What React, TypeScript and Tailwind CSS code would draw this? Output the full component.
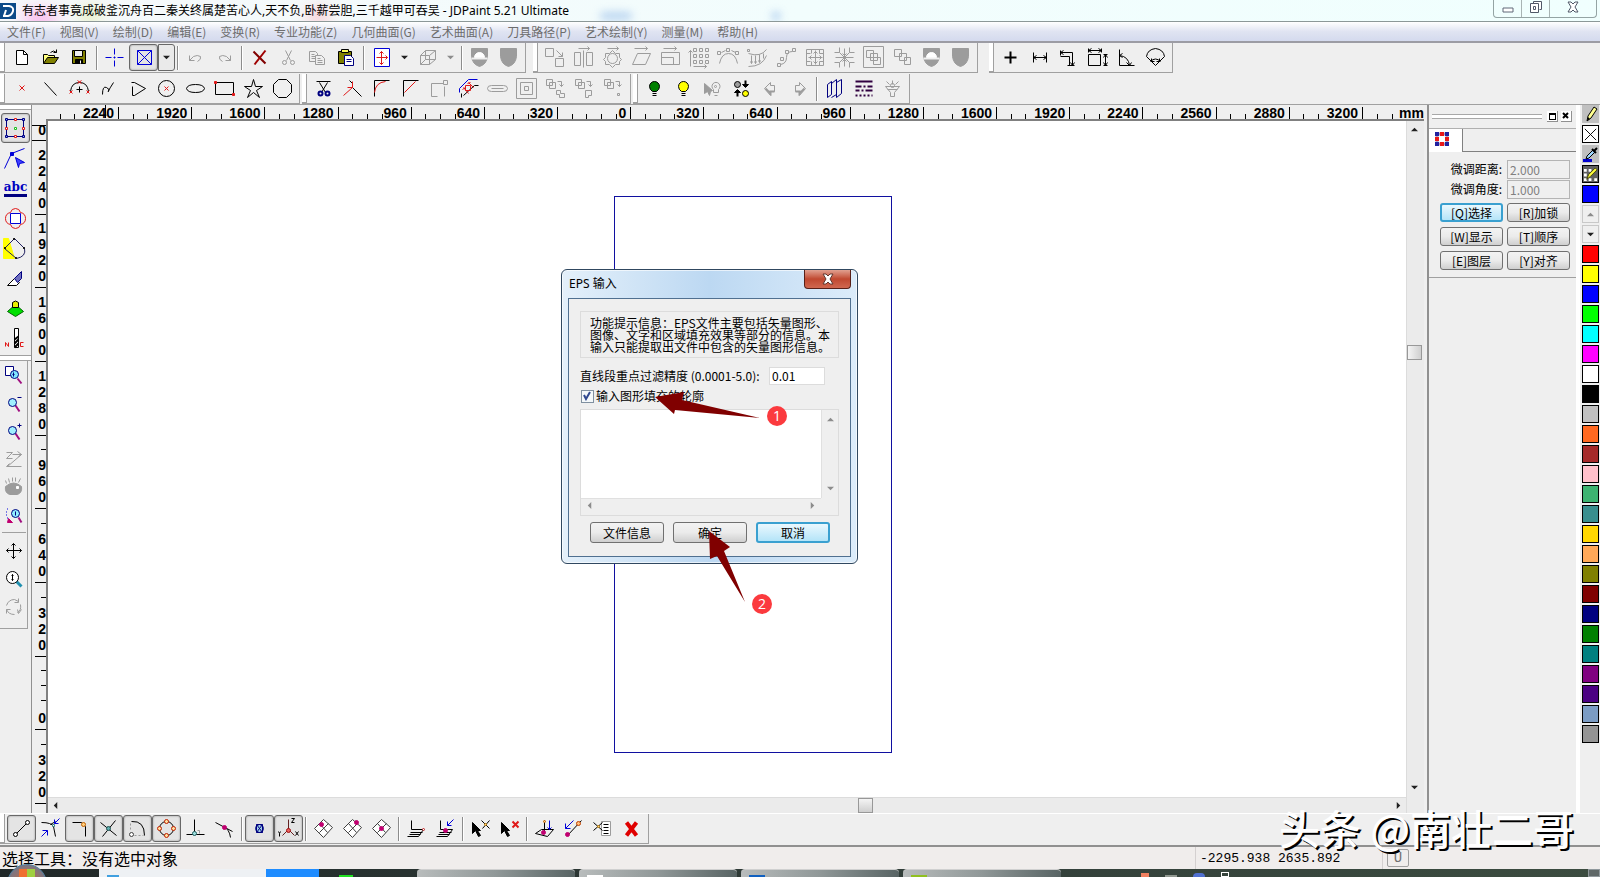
import React from 'react';
import clsx from 'clsx';

type Shape = [d: string, stroke?: string, fill?: string, width?: number];

const K = '#000000';
const G = '#9c9c9c';
const B = '#0000d8';
const N = '#000080';
const R = '#e01818';
const M = '#c00070';

const circle = (x: number, y: number, r: number) =>
  `M${x - r} ${y}a${r} ${r} 0 1 0 ${2 * r} 0a${r} ${r} 0 1 0 ${-2 * r} 0z`;
const box = (x: number, y: number, w: number, h: number) => `M${x} ${y}h${w}v${h}h${-w}z`;

const shield = 'M2 1h16v8q-1 8-8 10q-7-2-8-10z';
const arrowTop = 'M5 1h11M14 -1l2 2l-2 2';
const bulb = 'M8 13q-3-2-3-5a5 5 0 0 1 10 0q0 3-3 5z';
const mesh = 'M10 1l9 8l-9 10l-9-9zM6 5l8 9M15 5l-9 9';
const pointer = 'M2 4v11l3-3l3 6l2-1l-3-5h3z';

// every icon sits on a 21px grid, centred on 10,10
const icons: Record<string, Shape[]> = {
  // standard
  new: [['M5 3h7l4 4v10h-11z', K, '#fff'], ['M12 3v4h4', K]],
  open: [['M3 16v-9h4l1 1h6v3', K, '#ffff80'], ['M3 16l4-6h11l-4 6z', K, '#808000'], ['M10 5q3-3 6 0M16 2v3h-3', K]],
  save: [[box(3, 3, 13, 13), K, '#808000'], [box(5, 3, 8, 6), K, '#efefef'], [box(6, 12, 7, 4), K, K], ['M11 13v3', '#fff']],
  cross: [['M1 10h6M9 10h2M13 10h6M10 1v6M10 9v2M10 13v6', B]],
  marquee: [[box(4, 3, 14, 14), B], ['M4 3l14 14M18 3L4 17', B]],
  undo: [['M4 8v5h5M4 13l4-4q4-2 7 0q1 3-3 5', G]],
  redo: [['M16 8v5h-5M16 13l-4-4q-4-2-7 0q-1 3 3 5', G]],
  remove: [['M4 4l12 12', '#800000', 'none', 2], ['M16 3L5 17', '#a00000', 'none', 2]],
  cut: [['M7 3l5 10M13 3l-5 10', G], [circle(6, 15, 2), G], [circle(14, 15, 2), G]],
  copy: [['M2 4h6l2 2v8h-8zM4 7h3M4 9h4M4 11h4', G], ['M8 8h6l3 3v6h-9z', G, '#efefef'], ['M10 11h3M10 13h5M10 15h5', G]],
  paste: [[box(2, 4, 13, 12), K, '#808000'], [box(5, 2, 7, 3), K, '#ffff60'], ['M8 8h6l3 3v7h-9z', N, '#fff'], ['M10 12h5M10 14h5', N]],
  fit: [[box(3, 1, 15, 18), B, '#fff'], ['M10 4v13M5 10h11M8 6l2-2l2 2M8 15l2 2l2-2M14 8l2 2l-2 2', R]],
  cube: [['M3 8h9v9h-9zM3 8l5-5h10l-6 5M18 3v9l-6 5M8 3v9h10M8 12l-5 5', G]],
  maskHalf: [[shield, G, G], ['M5 10a5 5 0 0 1 10 0z', '#fff', '#fff'], ['M2 11h16', '#efefef', 'none', 2]],
  mask: [[shield, G, G]],
  // transform
  shift: [[box(1, 1, 8, 8), G], [box(11, 11, 8, 8), G], ['M12 3l6 6M18 5v4h-4', G]],
  mirror: [[box(1, 5, 6, 13), G], [box(13, 5, 6, 13), G], ['M10 3v17', G], [arrowTop, G]],
  rotate: [[circle(10, 11, 5), G], ['M10 3l3 3h4v4l2 2l-2 2v3h-4l-3 3l-3-3h-4v-3l-2-2l2-2v-4h4z', G], [arrowTop, G]],
  skew: [['M1 17l5-11h13l-5 11z', G], ['M3 1h13M14 -1l2 2l-2 2', G]],
  resize: [[box(1, 5, 18, 12), G], ['M1 10h12v7', G], ['M3 1h13M14 -1l2 2l-2 2', G]],
  array: [
    [[4, 10, 16].map((x) => [1, 7, 13].map((y) => box(x, y, 3, 3)).join('')).join(''), G],
    ['M1 19v-16M-1 5l2-2l2 2M4 19h13M15 17l2 2l-2 2', G],
  ],
  arc: [['M1 16q2-10 9-10t9 10', G], [box(-1, 4, 3, 3) + box(8, 1, 3, 3) + box(17, 4, 3, 3) + 'M3 5l4-2M13 3l4 2', G]],
  drape: [['M1 6q12 4 18-4M1 19q14 0 18-11M4 8v8M8 8v8M12 7v8M16 6v5M3 14l1 2l1-2M7 14l1 2l1-2M11 13l1 2l1-2', G], [box(0, 2, 2, 2), G]],
  path: [['M4 17q6-1 6-7t6-6', G], [box(1, 16, 3, 3) + box(4, 10, 3, 3) + box(9, 3, 3, 3) + box(16, 1, 3, 3), G]],
  grid: [[box(1, 2, 17, 16), G], ['M10 3v14M3 10h14M1 6h4M14 6h4M1 14h4M14 14h4M6 2v4M14 2v4M6 14v4M14 14v4M8 6l2-2l2 2M8 14l2 2l2-2M6 8l-2 2l2 2M14 8l2 2l-2 2', G]],
  squeeze: [['M5 0v5h-5M15 0v5h5M5 20v-5h-5M15 20v-5h5M10 1v18M1 10h18M5 5l10 10M15 5L5 15M8 6l2 2l2-2M8 14l2-2l2 2', G]],
  group: [[box(0, -1, 20, 21), G], [box(3, 3, 7, 7) + box(7, 6, 7, 7) + box(10, 10, 7, 7), G]],
  ungroup: [[box(2, 2, 7, 7) + box(7, 6, 7, 7) + box(12, 10, 6, 7), G]],
  // measure
  point: [['M10 4v12M4 10h12', K, 'none', 2]],
  span: [['M4 5v10M17 5v10M4 10h13M7 8l-3 2l3 2M14 8l3 2l-3 2', K]],
  step: [['M2 3v5M2 5h12v13M5 3l-3 2l3 2M2 9h9v9M9 18h7M12 15l2 3l2-3', K]],
  rect: [[box(1, 7, 12, 11), K], ['M1 1v4M14 1v4M1 3h13M18 7v11M16 7h4M16 18h4M16 10l2-3l2 3M16 15l2 3l2-3M4 1l-3 2l3 2M11 1l3 2l-3 2', K]],
  angle: [['M3 2v16h15M3 8q9 1 10 10M6 6l-3 2l3 2M10 15l3 3l2-3', K]],
  radius: [['M1 9q1-7 9-8q8 1 9 8l-9 9zM5 14q5-5 10 0M6 11v3h3M14 11v3h-3', K]],
  // draw
  dot: [['M8 7l5 5M13 7l-5 5', R]],
  line: [['M4 4l12 13', K]],
  arc3: [['M1 13q1-9 9-9t9 9', K], ['M0 12l3 3M3 12l-3 3M17 12l3 3M20 12l-3 3M8 2l4 3M12 2l-4 3', R], ['M10 8v6M7 11h6', K]],
  spline: [['M4 16q0-9 4-7t2 4t5-9', K]],
  polyline: [['M4 4h3l11 6l-11 7h-2v-9', K]],
  circle: [[circle(10, 10, 8), K], ['M8 8l4 4M12 8l-4 4', R]],
  ellipse: [['M1 10q1-4 9-4t9 4q-1 4-9 4t-9-4', K]],
  rectangle: [[box(1, 4, 18, 12), K], [box(0, 3, 2, 2) + box(18, 15, 2, 2), R, R]],
  star: [['M10 1l2 7h7l-6 4l3 7l-6-5l-6 5l3-7l-6-4h7z', K]],
  polygon: [['M6 1h8l5 5v8l-5 5h-8l-5-5v-8z', K]],
  // edit
  trim: [['M3 3h14M6 4l6 10M14 4l-6 10', K], [circle(7, 15, 2), N, 'none', 2], [circle(14, 15, 2), N, 'none', 2]],
  extend: [['M10 9l9 9M7 2l3 3', K], ['M1 17l9-8M10 3v6h-5', R]],
  fillet: [['M3 18v-16h15', K], ['M3 14q1-10 11-11', R]],
  chamfer: [['M3 18v-16h15', K], ['M4 14l11-11', R]],
  corner: [['M14 5h-12v13h6M15 8v10', G], [box(14, 2, 4, 4), G]],
  offset: [['M1 14v-4l9-9h9', B], ['M3 19l0-4M5 17l11-10h4', K], ['M5 9l5 6M10 4l5 5M4 11l3-2M9 5l3-1', R], [box(7, 7, 5, 5), R]],
  slot: [['M0 10q0-3 4-3h12q4 0 4 3t-4 3h-12q-4 0-4-3zM4 10h12', G]],
  concentric: [[box(0, 0, 20, 20), G], [box(4, 4, 12, 12) + box(8, 8, 4, 4), G]],
  unite: [[box(1, 1, 6, 6) + box(4, 4, 6, 6), G], ['M12 3h4v5M14 6l2 2l2-2M11 12h4v3h4v4h-5v-3h-3z', G]],
  subtract: [[box(1, 1, 6, 6) + box(4, 4, 6, 6), G], ['M12 3h4v5M14 6l2 2l2-2M11 12h6v5h-3v2h-3z', G]],
  intersect: [[box(1, 1, 6, 6) + box(4, 4, 6, 6), G], ['M12 3h4v5M14 6l2 2l2-2' + box(14, 15, 2, 2), G]],
  // show
  bulbGreen: [[bulb, K, '#008000'], ['M8 15h4M8 17h4', K]],
  bulbYellow: [[bulb, K, '#ffff00'], ['M8 15h4M8 17h4', K]],
  bulbPick: [['M2 5v10l3-2l2 4l1-4l2-1z', G, G], ['M11 11a4 4 0 1 1 5 0v3h-5z' + circle(13, 8, 1) + 'M12 17h3', G]],
  swap: [[circle(6, 6, 3), K, G], [circle(14, 15, 3), K, '#ffff00'], ['M14 2v5M6 18v-5', K, 'none', 2], ['M11 6h6l-3 3zM3 14h6l-3-3z', K, K]],
  prev: [['M4 10l6-6v3h4v6h-4v4z', G], ['M5 10l5 5v-2h4', G, 'none', 2]],
  next: [['M16 10l-6-6v3h-4v6h4v4z', G], ['M15 10l-5 5v-2h-4', G, 'none', 2]],
  layers: [['M3 6l4-3v13l-4 3zM7 5l5-4v15l-5 3M12 4l5-3v14l-5 4v-15', N]],
  linetype: [['M2 3h17', '#300040', 'none', 2], ['M2 8h6M10 8h2M14 8h5M2 12h4M8 12h2M12 12h7M2 17h2M6 17h2M10 17h2M14 17h2M18 17h1', '#300040', 'none', 2]],
  filter: [['M3 8h14l-5 6v4h-4v-4zM5 11h10M10 2v4M4 3l3 3M16 3l-3 3', G], [circle(10, 7, 2), G]],
  // left tool box
  select: [[box(1, 1, 17, 17), N], [box(0, 0, 2, 2) + box(17, 0, 2, 2) + box(0, 17, 2, 2) + box(17, 17, 2, 2), N, '#80a0ff'], [box(9, 0, 2, 2) + box(0, 9, 2, 2) + box(17, 9, 2, 2) + box(9, 17, 2, 2), R, '#fff'], [box(9, 9, 2, 2), '#20c020', '#fff']],
  node: [['M6 5L-1 20M6 5L19 0', B], [box(5, 4, 3, 3), B, B], ['M10 9l9 5l-5 1l-1 4z', B, '#4040ff']],
  envelope: [['M5 4q1-4 5-4t5 4q5 1 5 6t-5 6q-1 4-5 4t-5-4q-5-1-5-6t5-6z', R], [box(5, 5, 10, 10), B, '#fff']],
  shape: [['M-2 0h5l6 20h-11z', '#ffff00', '#ffff00'], ['M-1 10L9 0l10 10q2 8-8 10z', '#202060', 'none'], [box(8, 0, 1, 1) + box(18, 9, 1, 1) + box(10, 19, 1, 1) + box(-1, 9, 1, 1), K, K]],
  knife: [['M2 17l7-7l5 4l-3 3z', K, '#fff'], ['M9 10l7-7v7l-4 4z', N, '#7070c0']],
  relief: [['M10 6l8 7l-8 5l-8-5z', '#006000', '#00e000'], ['M7 4q3-3 6 0v5h-6z', K, '#e8f000']],
  drill: [['M9 0h4v19h-4z', K, '#fff'], ['M9 11l4-3M9 15l4-4M9 19l4-4', K, 'none', 2], ['M0 18v-4l3 4v-4M18 14h-3v4h3', R]],
  zoomWin: [[box(2, 1, 8, 9), N, '#fff'], ['M14 13l4 5', '#a01080', 'none', 2], [circle(11, 9, 4), N, '#80e8ff'], ['M10 7v4M9 9h2', N]],
  zoomOut: [['M12 12l4 6', '#a01080', 'none', 2], [circle(9, 9, 4), N, '#a0f0ff'], ['M14 4h4', N]],
  zoomIn: [['M12 12l4 6', '#a01080', 'none', 2], [circle(9, 9, 4), N, '#a0f0ff'], ['M14 4h4M16 2v4', N]],
  zoomPrev: [['M3 3h6l-6 6h6M9 5h9L4 17h14M14 2l4 3l-3 2M6 14l-3 3h5', G]],
  eye: [['M2 9q8-7 16 0q1 6-4 8h-8q-5-2-4-8z', G, G], ['M3 6l-1-3M6 5l-1-4M9 4v-4M12 4v-4M15 5l2-4', G], [box(13, 9, 2, 2), '#fff', '#fff']],
  zoomObj: [['M4 3v1M3 6v1M3 9v1M4 12v1', B], ['M5 13l4 4h-5z', M, M], ['M15 12l3 5', '#a01080', 'none', 2], [circle(12, 8, 4), N, '#90f0ff'], ['M12 6v4', N]],
  pan: [['M10 3v15M3 10h15M8 5l2-2l2 2M8 16l2 2l2-2M5 8l-2 2l2 2M16 8l2 2l-2 2', K]],
  zoomDyn: [['M13 13l5 5', '#2090b0', 'none', 3], [circle(9, 9, 6), K, '#fff'], ['M9 6v6M8 7l1-1l1 1M8 11l1 1l1-1', K]],
  refresh: [['M3 9q2-6 8-6l4 2M17 8q1 6-3 8M11 18q-6 0-8-5M15 2v4h-4M18 13l-3 4l-1-4M3 17v-4h4', G]],
  // snap bar
  snapEnd: [['M5 15l10-10', K], [circle(4, 16, 2), K, '#fff'], [circle(16, 4, 2), K, '#fff']],
  snapNear: [['M1 4q10 0 12 4l2 10M10 6l5-3', K], ['M19 0l-5 5M14 1v4h4M1 18l6-6M2 12h5v5', B], [box(12, 6, 2, 2), '#408080', '#fff']],
  snapCorner: [['M3 4h9l4 4v10', K], [circle(14, 6, 2), '#c06000', '#ffd080']],
  snapCross: [['M2 4l16 13M17 2L4 18', K], [circle(10, 10, 2), '#205050', '#60b0b0']],
  snapArc: [['M4 3q13-1 13 14', K], ['M7 17h2M11 17h2M15 17h1M3 5v2M3 9v2', G], [circle(4, 16, 2), '#404040', '#fff']],
  snapQuad: [[circle(10, 10, 7), K], [[[10, 3], [17, 10], [10, 17], [3, 10]].map(([x, y]) => circle(x, y, 2)).join(''), '#c02000', '#ffe0a0']],
  snapPerp: [['M9 1v15M1 16h18', K], ['M12 12h2v3', G], [circle(9, 15, 2), '#206060', '#a0e0e0']],
  snapTan: [['M1 4l17 9M9 8q6 3 7 11', K], [circle(10, 9, 2), M, M]],
  snapGrid: [[circle(10, 10, 4), N, '#a0d0e8'], [box(7, 6, 6, 8), N], ['M7 6l6 8M13 6l-6 8', N]],
  snapAxis: [['M10 1v10M10 11l-6 6M10 11l6 6', '#602020'], ['M13 0h3l-3 4h3M0 13l1 2l1-2M1 15v3M17 13l3 4M20 13l-3 4', K], [circle(10, 12, 2), '#a01010', '#e86060']],
  mesh1: [[mesh, '#404040', '#fff'], [circle(8, 6, 2), M, M]],
  mesh2: [[mesh, '#404040', '#fff'], [circle(14, 4, 2), M, M]],
  mesh3: [[mesh, '#404040', '#fff'], [circle(10, 10, 2), M, M]],
  plane1: [['M5 2v9h12M4 14h12M3 16h11M1 18h11M17 11l-5 7', K], [circle(17, 11, 1), '#c02020', '#fff']],
  plane2: [['M5 2v9h12M4 14h12M3 16h11M1 18h11M17 11l-5 7', K], ['M18 1l-6 6M12 3v4h4', B], [circle(10, 12, 2), M, M]],
  pickAdd: [[pointer, K, K], ['M11 2l8 8M19 2l-7 8', K], [circle(15, 6, 1), '#c08000', '#ffd080']],
  pickDel: [[pointer, K, K], ['M13 3l6 6M19 3l-6 6', R, 'none', 2]],
  project: [['M1 15l6-4h12l-6 7zM10 2v13', K], ['M15 2v9M13 9l2 2l2-2', B], [circle(10, 3, 1), '#c06000', '#ffd080'], [circle(9, 14, 2), M, M]],
  align: [['M4 17L18 2', K], ['M10 2l-8 8M2 5v5h5', B], [circle(15, 5, 2), '#c04000', '#ffc080'], [circle(4, 16, 2), M, M]],
  list: [[box(9, 3, 9, 14), G, '#fff'], ['M11 6h5M11 9h5M11 12h5M11 15h5', K], ['M1 4l9 8M10 4l-9 8', K], [circle(6, 8, 1), '#c08000', '#ffd080']],
  close: [['M5 4l10 13M15 4L5 17', '#e00000', 'none', 4]],
};

function Icon({ name }: { name: string }) {
  return (
    <svg viewBox="0 0 21 21" className="size-[21px] shrink-0 overflow-visible" aria-hidden="true">
      <g transform="translate(.5 .5)">
        {icons[name].map(([d, stroke = K, fill = 'none', width = 1], i) => (
          <path key={i} d={d} stroke={stroke} fill={fill} strokeWidth={width} />
        ))}
      </g>
    </svg>
  );
}

function Tool({ name, pressed, className }: { name: string; pressed?: boolean; className?: string }) {
  return (
    <button
      type="button"
      aria-label={name}
      className={clsx(
        'flex w-[29px] h-[27px] shrink-0 items-center justify-center rounded-[3px] border',
        pressed ? 'border-[#686868] bg-[#e4e4e4] shadow-[inset_0_0_2px_#888]' : 'border-transparent',
        className
      )}
    >
      {name === 'text' ? (
        <span className="border-b-3 border-[#000080] font-['DejaVu_Serif',serif] text-xs leading-[14px] font-bold text-[#0000c0]">abc</span>
      ) : (
        <Icon name={name} />
      )}
    </button>
  );
}

function Drop({ disabled, framed }: { disabled?: boolean; framed?: boolean }) {
  return (
    <button
      type="button"
      aria-label="more"
      className={clsx(
        'flex h-[27px] w-[17px] shrink-0 items-center justify-center border',
        framed ? 'rounded-r-[3px] border-[#686868] bg-[#eaeaea]' : 'border-transparent'
      )}
    >
      <Arrow dir="down" disabled={disabled} />
    </button>
  );
}

const arrowPaths = { up: 'M0 6l4-4l4 4z', down: 'M0 2h8l-4 4z', left: 'M6 0v8l-4-4z', right: 'M2 0v8l4-4z' };

function Arrow({ dir, disabled }: { dir: keyof typeof arrowPaths; disabled?: boolean }) {
  return (
    <svg viewBox="0 0 8 8" className="size-[7px] shrink-0" aria-hidden="true">
      <path d={arrowPaths[dir]} fill={disabled ? '#8c8c8c' : '#202020'} />
    </svg>
  );
}

// '|' draws a separator, '!' before a name keeps it pressed, 'v' is a drop arrow
function ToolBar({ items }: { items: string }) {
  return (
    <div className="flex h-[30px] shrink-0 items-center border-r border-b border-[#a0a0a0] pr-[2px]">
      <div className="mr-[2px] h-full w-[5px] border-r border-b border-[#a0a0a0] bg-white" />
      {items.split(' ').map((item, i) => {
        if (item === '|') return <div key={i} className="mx-[2px] h-6 w-[2px] border-l border-[#8c8c8c] bg-white" />;
        if (item[0] === 'v') return <Drop key={i} framed={item === 'v!'} disabled={item === 'v-'} />;
        return <Tool key={i} name={item.replace('!', '')} pressed={item[0] === '!'} />;
      })}
    </div>
  );
}

const menus = ['文件(F)', '视图(V)', '绘制(D)', '编辑(E)', '变换(R)', '专业功能(Z)', '几何曲面(G)', '艺术曲面(A)', '刀具路径(P)', '艺术绘制(Y)', '测量(M)', '帮助(H)'];

const rulerX = [2240, 1920, 1600, 1280, 960, 640, 320, 0, 320, 640, 960, 1280, 1600, 1920, 2240, 2560, 2880, 3200];
const rulerY = [2240, 1920, 1600, 1280, 960, 640, 320, 0, 320];

const swatches = [
  'bg-[#ff0000]', 'bg-[#ffff00]', 'bg-[#0000ff]', 'bg-[#00ff00]', 'bg-[#00ffff]', 'bg-[#ff00ff]', 'bg-white',
  'bg-black', 'bg-[#c0c0c0]', 'bg-[#ff6820]', 'bg-[#a52a2a]', 'bg-[#ffc0cb]', 'bg-[#3cb371]', 'bg-[#388e8e]',
  'bg-[#ffd700]', 'bg-[#ffa858]', 'bg-[#808000]', 'bg-[#800000]', 'bg-[#000080]', 'bg-[#008000]', 'bg-[#008080]',
  'bg-[#800080]', 'bg-[#4b0082]', 'bg-[#7b9cc4]', 'bg-[#949494]',
];

const winButton = 'rounded-[3px] border border-[#707070] bg-linear-to-b from-[#f3f3f3] via-[#ebebeb] to-[#cfcfcf] text-xs text-black';
const winButtonHot = 'rounded-[3px] border-2 border-[#3aa0d0] bg-linear-to-b from-[#eaf8fe] to-[#b4e4f8] text-xs text-black';

function TitleBar() {
  return (
    <header className="relative flex h-[22px] items-center overflow-hidden border-b border-[#8c9898] bg-linear-to-r from-[#f6f8fa] via-[#f2fdfd] to-[#f0fffe]">
      <div className="absolute top-3 left-6 h-3 w-8 rounded-full bg-[#ff60d8] opacity-60 blur-sm" />
      <div className="absolute top-2 left-20 h-3 w-5 rounded-full bg-[#c8e060] opacity-60 blur-sm" />
      <div className="absolute top-2 left-[306px] h-4 w-6 rounded-full bg-[#ff8090] opacity-40 blur-sm" />
      <div className="absolute top-3 left-[600px] h-2 w-8 rounded-full bg-[#90b8e8] opacity-60 blur-xs" />
      <div className="absolute top-3 left-[772px] size-2 rounded-full bg-[#90b8e8] opacity-80 blur-xs" />
      <svg viewBox="0 0 16 16" className="relative size-4" aria-hidden="true">
        <path d="M0 0h16v16H0z" fill="#0c4a88" />
        <path d="M3 3h6q5 1 4 5q-1 4-5 5H3M4 13l2-6" stroke="#fff" strokeWidth="2" fill="none" />
      </svg>
      <h1 className="relative ml-[6px] font-['Noto_Sans','Noto_Sans_CJK_SC',sans-serif] text-xs text-black">
        有志者事竟成破釜沉舟百二秦关终属楚苦心人,天不负,卧薪尝胆,三千越甲可吞吴 - JDPaint 5.21 Ultimate
      </h1>
      <div className="relative mr-[3px] ml-auto flex h-[18px] self-start rounded-b border border-t-0 border-[#94a4a4]">
        <button type="button" aria-label="minimize" className="flex w-7 items-center justify-center border-r border-[#a8b4b4]">
          <svg viewBox="0 0 12 12" className="size-3"><path d="M1 5h10v4H1z" fill="#fff" stroke="#606878" /></svg>
        </button>
        <button type="button" aria-label="restore" className="flex w-7 items-center justify-center border-r border-[#a8b4b4] pb-1">
          <svg viewBox="0 0 12 12" className="size-3"><path d="M3.500 2.500V.5h8v8h-2M.5 2.500h8v9h-8zM3.500 5.500h2v3h-2z" fill="#fff" stroke="#505868" /></svg>
        </button>
        <button type="button" aria-label="close" className="flex w-[46px] items-center justify-center pb-1">
          <svg viewBox="0 0 12 12" className="size-3"><path d="M1 1h3l2 2l2-2h3l-3 5l3 5H8L6 9l-2 2H1l3-5z" fill="#fff" stroke="#505868" /></svg>
        </button>
      </div>
    </header>
  );
}

function ToolBox() {
  return (
    <aside className="flex w-8 shrink-0 flex-col border-r border-[#909090]">
      <div className="h-[5px] border-b border-[#a0a0a0] bg-white" />
      <div className="flex flex-col items-center border-b border-[#a0a0a0] pt-[3px] pb-[2px] *:h-[30px]">
        <Tool name="select" pressed />
        {['node', 'text', 'envelope', 'shape', 'knife', 'relief', 'drill'].map((name) => (
          <Tool key={name} name={name} />
        ))}
      </div>
      <div className="h-[5px] border-b border-[#a0a0a0] bg-white" />
      <div className="mr-[3px] flex grow-0 flex-col items-center border-r border-b border-[#a0a0a0] pb-2 *:h-7">
        {['zoomWin', 'zoomOut', 'zoomIn', 'zoomPrev', 'eye', 'zoomObj'].map((name) => (
          <Tool key={name} name={name} />
        ))}
        <hr className="my-[3px] h-px! w-6 border-[#a0a0a0]" />
        {['pan', 'zoomDyn', 'refresh'].map((name) => (
          <Tool key={name} name={name} />
        ))}
      </div>
    </aside>
  );
}

const rulerText = "font-['Liberation_Sans',sans-serif] text-sm font-bold text-black";

function RulerVertical() {
  return (
    <div className={clsx('flex w-[14px] shrink-0 flex-col pt-4', rulerText)}>
      <div className="relative h-5 border-b border-black text-right leading-[18px]">
        0
        <div className="absolute top-1 left-0 w-full border-t border-black" />
      </div>
      {rulerY.map((value, i) => (
        <div key={i} className="relative flex flex-1 flex-col items-end">
          {[0, 1, 2, 3].map((n) => (
            <div key={n} className="w-[5px] flex-1 border-b border-black" />
          ))}
          <div className="w-[11px] flex-1 border-b border-black" />
          <div className="absolute right-0 bottom-1 flex w-3 flex-col items-end bg-[#efefef] leading-4">
            {String(value).split('').map((digit, n) => (
              <span key={n}>{digit}</span>
            ))}
          </div>
        </div>
      ))}
      <div className="h-[9px]" />
    </div>
  );
}

function RulerHorizontal() {
  return (
    <div className={clsx('relative flex h-[14px]', rulerText)}>
      <div className="grid flex-1 grid-cols-18">
        {rulerX.map((value, i) => (
          <div key={i} className="relative flex items-end">
            {[0, 1, 2, 3].map((n) => (
              <div key={n} className="h-[5px] flex-1 border-r border-black" />
            ))}
            <div className="h-3 flex-1 border-r border-black" />
            <span className="absolute right-[5px] bottom-0 bg-[#efefef] leading-[11px]">{value}</span>
          </div>
        ))}
      </div>
      <div className="flex w-[61px] items-end">
        <div className="h-[5px] w-[15px] border-r border-black" />
        <div className="h-[5px] w-[15px] border-r border-black" />
        <span className="ml-auto leading-[11px]">mm</span>
      </div>
      <div className="absolute top-0 left-[59px] h-[13px] border-l border-black" />
    </div>
  );
}

function EpsDialog() {
  return (
    <section
      role="dialog"
      aria-label="EPS 输入"
      className="absolute top-[148px] left-[513px] w-[297px] rounded-md border border-[#304860] bg-linear-to-r from-[#e4f0fa] via-[#bcd8f2] to-[#dcecfa] px-[6px] pb-[6px] shadow-[inset_0_0_0_1px_#ffffffa0]"
    >
      <div className="flex h-7 items-start justify-between">
        <h2 className="pl-px font-['Noto_Sans','Noto_Sans_CJK_SC',sans-serif] text-xs leading-7 text-black">EPS 输入</h2>
        <button
          type="button"
          aria-label="close dialog"
          className="flex h-[19px] w-[47px] items-center justify-center rounded-b border border-t-0 border-[#582018] bg-linear-to-b from-[#e0a090] via-[#c04830] to-[#d06850]"
        >
          <svg viewBox="0 0 12 12" className="size-3">
            <path d="M1 1h3l2 2l2-2h3l-3 5l3 5H8L6 9l-2 2H1l3-5z" fill="#fff" stroke="#603830" />
          </svg>
        </button>
      </div>
      <div className="border border-[#507090] bg-[#efefef] px-[11px] pt-3 pb-[13px]">
        <p className="h-[47px] border border-[#dcdcdc] px-[9px] pt-[5px] text-xs leading-3 whitespace-nowrap text-black">
          功能提示信息：EPS文件主要包括矢量图形、
          <br />
          图像、文字和区域填充效果等部分的信息。本
          <br />
          输入只能提取出文件中包含的矢量图形信息。
        </p>
        <div className="mt-2 flex h-[19px] items-center text-xs text-black">
          <label htmlFor="precision" className="whitespace-nowrap">直线段重点过滤精度 (0.0001-5.0):</label>
          <input
            id="precision"
            defaultValue="0.01"
            className="mr-[14px] ml-auto h-[18px] w-[56px] border border-[#dcdcdc] bg-white px-[2px]"
          />
        </div>
        <label className="mt-[3px] flex h-4 items-center gap-[2px] text-xs text-black">
          <span className="grid size-[14px] place-items-center">
            <input type="checkbox" defaultChecked className="peer col-start-1 row-start-1 size-[13px] appearance-none border border-[#8090a0] bg-[#f4f8fa]" />
            <svg viewBox="0 0 10 10" className="pointer-events-none col-start-1 row-start-1 size-[10px] opacity-0 peer-checked:opacity-100">
              <path d="M2 4l2 4l4-7" fill="none" stroke="#304890" strokeWidth="2" />
            </svg>
          </span>
          输入图形填充的轮廓
        </label>
        <div className="mt-[5px] grid h-[107px] grid-cols-[1fr_17px] grid-rows-[1fr_17px] border border-[#dcdcdc]">
          <textarea aria-label="info" readOnly className="resize-none bg-white outline-none" />
          <div className="flex flex-col items-center justify-between border-l border-[#e0e0e0] py-[6px]">
            <Arrow dir="up" disabled />
            <Arrow dir="down" disabled />
          </div>
          <div className="flex items-center justify-between border-t border-[#e0e0e0] px-[5px] pb-1">
            <Arrow dir="left" disabled />
            <Arrow dir="right" disabled />
          </div>
        </div>
        <div className="mt-[6px] flex h-[21px] gap-[9px] pl-[10px]">
          <button type="button" className={clsx('w-[74px]', winButton)}>文件信息</button>
          <button type="button" className={clsx('w-[74px]', winButton)}>确定</button>
          <button type="button" className={clsx('w-[74px] leading-4', winButtonHot)}>取消</button>
        </div>
      </div>
    </section>
  );
}

function Callouts() {
  const badge = "absolute flex size-5 items-center justify-center rounded-full bg-[#fb3a3e] font-['Open_Sans',sans-serif] text-sm text-white";
  return (
    <>
      <svg className="pointer-events-none absolute inset-0 size-full" aria-hidden="true">
        <path d="M607 276l29-5l-2 8l78 18l-85-8l-1 4z" fill="#800000" />
        <path d="M661 410l21 16l-6 4l21 51l-28-46l-7 3z" fill="#800000" />
      </svg>
      <span className={clsx(badge, 'top-[285px] left-[719px]')}>1</span>
      <span className={clsx(badge, 'top-[473px] left-[704px]')}>2</span>
    </>
  );
}

function Workspace() {
  return (
    <div className="flex flex-1 border-t-2 border-l-2 border-[#808080]">
      <div className="flex min-w-0 flex-1 flex-col">
        <div className="relative flex-1 overflow-hidden bg-white">
          <div className="absolute top-[75px] left-[566px] h-[557px] w-[278px] border border-[#1010a0]" />
          <EpsDialog />
          <Callouts />
        </div>
        <div className="flex h-4 items-center border-t border-[#dcdcdc] bg-[#ebebeb] px-1">
          <Arrow dir="left" />
          <div className="flex flex-1 justify-center">
            <div className="ml-[276px] size-[15px] border border-[#989898] bg-linear-to-b from-[#f4f4f4] to-[#cfcfcf]" />
          </div>
          <Arrow dir="right" />
        </div>
      </div>
      <div className="flex w-[18px] flex-col items-center border-l border-[#dcdcdc] bg-[#ebebeb] pt-[5px] pr-[2px] pb-[22px]">
        <Arrow dir="up" />
        <div className="flex-1 basis-0" />
        <div className="size-[15px] border border-[#989898] bg-linear-to-r from-[#f4f4f4] to-[#cfcfcf]" />
        <div className="flex-2 basis-0" />
        <Arrow dir="down" />
      </div>
    </div>
  );
}

const actions = ['[Q]选择', '[R]加锁', '[W]显示', '[T]顺序', '[E]图层', '[Y]对齐'];

function SidePanel() {
  const field = 'h-[19px] w-[63px] border border-[#b4b4b4] bg-[#efefef] px-[2px] text-xs text-[#808080]';
  return (
    <aside className="ml-[3px] flex w-[149px] shrink-0 flex-col border-l-2 border-[#909090]">
      <div className="flex h-6 items-center border-b border-[#b0b0b0] px-[3px] pr-1">
        <div className="mr-[5px] h-[5px] flex-1 border-y border-[#a8a8a8] bg-white" />
        <button type="button" aria-label="float" className="mr-[3px] size-[11px] border-r border-b border-[#909090] bg-white p-[2px]">
          <span className="block size-[7px] border border-t-2 border-black" />
        </button>
        <button type="button" aria-label="close panel" className="size-[11px] border-r border-b border-[#909090] bg-white">
          <svg viewBox="0 0 10 10" className="size-[10px]"><path d="M2 2l5 5M7 2l-5 5" stroke="#000" strokeWidth="2" /></svg>
        </button>
      </div>
      <div className="flex h-[23px]">
        <div className="flex w-[34px] justify-center border-r border-[#808080] bg-white pt-[3px] pr-2">
          <svg viewBox="0 0 14 14" className="size-[14px]" aria-hidden="true">
            <path d="M2 2h10v10H2z" fill="#fff" stroke="#b0a0c0" strokeWidth="3" />
            <path d="M0 0h4v4H0zM10 0h4v4h-4zM0 10h4v4H0zM10 10h4v4h-4z" fill="#2020a0" />
            <path d="M5 0h4v4H5zM0 5h4v4H0zM10 5h4v4h-4zM5 10h4v4H5z" fill="#e81818" />
          </svg>
        </div>
        <div className="flex-1 border-b border-[#808080]" />
      </div>
      <div className="flex flex-col border-b border-[#a0a0a0] pt-[7px] pr-[6px] pb-[7px] pl-[11px]">
        <label className="flex h-5 items-center justify-end gap-[5px] text-xs text-black">
          <span>微调距离:</span>
          <input className={field} defaultValue="2.000" disabled />
        </label>
        <label className="flex h-5 items-center justify-end gap-[5px] text-xs text-black">
          <span>微调角度:</span>
          <input className={field} defaultValue="1.000" disabled />
        </label>
        <div className="mt-1 grid grid-cols-2 gap-x-1 gap-y-[5px]">
          {actions.map((action, i) => (
            <button key={action} type="button" className={clsx('h-[19px] leading-[15px]', i === 0 ? winButtonHot : winButton)}>
              {action}
            </button>
          ))}
        </div>
      </div>
    </aside>
  );
}

function ColorBar() {
  const cell = 'flex h-[18px] w-[17px] items-center justify-center';
  return (
    <div className="flex shrink-0 flex-col gap-[2px] border-l-4 border-white pr-px pl-[2px]">
      <div className={clsx(cell, 'bg-[#c0c0c0]')}>
        <svg viewBox="0 0 16 16" className="size-4"><path d="M4 15l1-5l6-9l3 2l-6 9z" fill="#ffff90" stroke="#000" /><path d="M4 15l1-4l2 2z" /></svg>
      </div>
      <div className={clsx(cell, 'border border-black bg-white')}>
        <svg viewBox="0 0 16 16" className="size-[15px]"><path d="M2 2l12 12M14 2L2 14" stroke="#000" /></svg>
      </div>
      <div className={clsx(cell, 'bg-[#c0c0c0]')}>
        <svg viewBox="0 0 16 16" className="size-4">
          <path d="M0 13h9v3H0z" fill="#0000d0" />
          <path d="M3 13l1-3l6-6l2 2l-6 6z" fill="#a0d8ff" stroke="#000" />
          <path d="M9 3l4 4M11 5l3-3" stroke="#000" strokeWidth="2" />
        </svg>
      </div>
      <div className={clsx(cell, 'border border-black bg-[#606060]')}>
        <svg viewBox="0 0 16 16" className="size-[15px]">
          <path d="M1 2h3v3H1zM6 2h3v3H6zM1 7h3v3H1zM1 12h3v3H1zM6 12h3v3H6zM12 12h3v3h-3z" fill="#fff" />
          <path d="M4 13l2-5l7-7l2 2l-7 7z" fill="#ffff40" stroke="#404000" />
        </svg>
      </div>
      <div className={clsx(cell, 'border border-black bg-[#0000ff]')} />
      <button type="button" aria-label="colors up" className={clsx(cell, 'border border-[#c8c8c8]')}><Arrow dir="up" disabled /></button>
      <button type="button" aria-label="colors down" className={clsx(cell, 'border border-[#c8c8c8]')}><Arrow dir="down" /></button>
      {swatches.map((color) => (
        <button key={color} type="button" aria-label={color} className={clsx(cell, 'border border-black', color)} />
      ))}
    </div>
  );
}

function TaskBar() {
  const task = 'h-full w-[158px] rounded-t-sm border-t border-[#d0d0d0] bg-linear-to-r from-[#b8bcbc] via-[#909898] to-[#586464]';
  return (
    <footer className="relative flex h-2 gap-1 bg-linear-to-r from-[#202828] via-[#303c38] to-[#3c4c40]">
      <div className="absolute -top-[5px] left-[7px] h-[13px] w-10 overflow-hidden">
        <div className="flex size-10 justify-center rounded-full border border-[#5080a0] bg-radial from-[#d06020] to-[#4878a0] pt-1">
          <div className="h-4 w-2 bg-[#f07030]" />
          <div className="h-4 w-2 bg-[#a0d040]" />
        </div>
      </div>
      <div className="ml-[99px] flex w-[220px]">
        <div className="flex-3 bg-[#eef1f4] pl-2"><div className="mt-[6px] h-[2px] w-3 bg-[#40a0e0]" /></div>
        <div className="flex-1 bg-[#1e8cff]" />
      </div>
      <div className="w-[90px] pl-4"><div className="mt-[6px] h-[2px] w-[14px] bg-[#20e020]" /></div>
      <div className={task} />
      <div className={task}><div className="mt-[5px] ml-2 h-[2px] w-4 bg-white" /></div>
      <div className={task}><div className="mt-[5px] ml-2 h-[2px] w-4 bg-[#1060c0]" /></div>
      <div className={task}><div className="mt-[5px] ml-2 h-[2px] w-4 bg-[#90c020]" /></div>
      <div className="flex flex-1 items-end gap-4 pl-[76px]">
        <div className="h-1 w-2 bg-[#f08060]" />
        <div className="h-[2px] w-3 bg-[#909890]" />
        <div className="h-1 w-3 rounded-t-full bg-[#5070d0]" />
        <div className="h-[5px] w-2 border border-white" />
      </div>
      <div className="w-3 border border-[#90989c] bg-[#606868]" />
    </footer>
  );
}

export default function App() {
  return (
    <div className="relative flex min-h-screen flex-col overflow-hidden bg-[#efefef] font-['Noto_Sans_CJK_SC',sans-serif]">
      <TitleBar />
      <nav className="flex h-[21px] items-center gap-[14px] border-b-2 border-[#9c9ca4] bg-linear-to-b from-white via-[#e0e4f2] to-[#d4daee] pl-[7px] text-xs text-[#6d6d6d]">
        {menus.map((menu) => (
          <a key={menu} href="#" className="leading-4 whitespace-nowrap">{menu}</a>
        ))}
      </nav>
      <div className="flex h-[31px] items-start gap-[3px]">
        <ToolBar items="new open save | cross !marquee v! | undo redo | remove cut copy paste | fit v cube v- | maskHalf mask" />
        <div className="ml-1 flex">
          <ToolBar items="shift mirror rotate skew resize array arc drape path grid squeeze group ungroup maskHalf mask" />
        </div>
        <div className="ml-2 flex">
          <ToolBar items="point span step rect angle radius" />
        </div>
      </div>
      <div className="flex h-[31px] items-start gap-[2px] border-b border-[#a0a0a0]">
        <ToolBar items="dot line arc3 spline polyline circle ellipse rectangle star polygon" />
        <ToolBar items="trim extend fillet chamfer corner offset slot concentric unite subtract intersect" />
        <ToolBar items="bulbGreen bulbYellow bulbPick swap prev next | layers linetype filter" />
      </div>
      <main className="flex flex-1">
        <ToolBox />
        <RulerVertical />
        <div className="flex min-w-0 flex-1 flex-col">
          <RulerHorizontal />
          <Workspace />
        </div>
        <SidePanel />
        <ColorBar />
      </main>
      <div className="flex h-[34px] items-start border-t border-b-2 border-t-white border-b-[#909090]">
        <ToolBar items="!snapEnd snapNear !snapCorner !snapCross !snapArc !snapQuad snapPerp snapTan | !snapGrid !snapAxis | mesh1 mesh2 mesh3 | plane1 plane2 | pickAdd pickDel | project align list close" />
      </div>
      <div className="flex h-[22px] items-center bg-[#f0edec] pl-[2px] text-base leading-5 text-black">
        <span>选择工具：没有选中对象</span>
        <div className="ml-auto flex h-full w-[188px] items-center border-x border-[#d4d0d0] pt-[2px] pl-1 font-['Liberation_Mono',monospace] text-[13px] whitespace-nowrap">
          -2295.938 2635.892
        </div>
        <div className="mr-[191px] ml-1 flex h-[18px] w-[22px] items-center justify-center rounded-xs border border-[#a0a0a0] font-['Liberation_Mono',monospace] text-sm text-[#707070]">
          U
        </div>
      </div>
      <TaskBar />
      <div className="pointer-events-none absolute right-[26px] bottom-[28px] text-[41px] leading-[44px] font-medium whitespace-nowrap text-white [text-shadow:2px_2px_0_#000]">
        头条 @南壮二哥
      </div>
    </div>
  );
}
